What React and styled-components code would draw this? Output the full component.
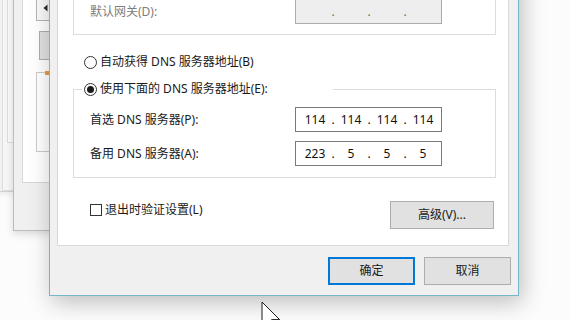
import React from "react";
import styled, { createGlobalStyle } from "styled-components";

const Global = createGlobalStyle`
  html, body { margin: 0; padding: 0; background: #fcfcfc; }
  #root { width: 570px; height: 320px; }
`;

const Desktop = styled.div`
  position: relative;
  width: 570px;
  height: 320px;
  overflow: hidden;
  background: #fcfcfc;
  font-family: "Noto Sans", "Noto Sans CJK SC", sans-serif;
  font-size: 12px;
  color: #1a1a1a;
`;

/* ---------- background windows ---------- */
const BackWindow = styled.div`
  position: absolute;
  left: -40px;
  top: -10px;
  width: 54px;
  height: 202px;
  box-sizing: border-box;
  background: #f1f1f1;
  border: 1px solid #d2d2d2;
  box-shadow: 0 2px 6px rgba(0, 0, 0, 0.08);
  display: flex;
`;

const BackPane = styled.div`
  margin-left: ${(p) => p.$indent}px;
  flex: 1;
  box-sizing: border-box;
  height: ${(p) => p.$h}px;
  border-left: 1px solid #dedede;
  border-bottom: 1px solid #dedede;
  background: ${(p) => p.$bg};
  display: flex;
`;

const MidWindow = styled.div`
  position: absolute;
  left: 13px;
  top: -10px;
  width: 70px;
  height: 241px;
  box-sizing: border-box;
  background: #f0f0f0;
  border: 1px solid #bcbcbc;
  box-shadow: 0 3px 8px rgba(0, 0, 0, 0.14);
  padding-left: 8px;
`;

const MidPanel = styled.div`
  box-sizing: border-box;
  height: 192px;
  background: #ffffff;
  border: 1px solid #d8d8d8;
  display: flex;
  flex-direction: column;
  align-items: flex-start;
  padding-top: 2px;
`;

const MidBox = styled.div`
  box-sizing: border-box;
  margin-left: ${(p) => p.$ml}px;
  margin-top: ${(p) => p.$mt}px;
  width: 60px;
  height: ${(p) => p.$h}px;
  border: 1px solid ${(p) => p.$border};
  background: ${(p) => p.$bg};
  position: relative;
  display: flex;
  align-items: center;
  padding-left: 6px;
`;

const OrangeMark = styled.span`
  position: absolute;
  left: 8px;
  top: -2px;
  width: 4px;
  height: 4px;
  background: #e0a040;
`;

/* ---------- dialog ---------- */
const Dialog = styled.div`
  position: absolute;
  left: 49px;
  top: -60px;
  width: 470px;
  box-sizing: border-box;
  border: 1px solid #74b7c9;
  background: #f0f0f0;
  box-shadow: 3px 6px 22px rgba(0, 0, 0, 0.26);
  padding: 9px 9px 10px 7px;
  display: flex;
  flex-direction: column;
  z-index: 2;
`;

const TabPanel = styled.div`
  background: #ffffff;
  border: 1px solid #d9d9d9;
  padding: 0 12px 16px 15px;
  display: flex;
  flex-direction: column;
`;

const GroupBox = styled.div`
  border: 1px solid #dcdcdc;
  margin-top: ${(p) => p.$mt}px;
  padding: ${(p) => p.$pt}px 0 ${(p) => p.$pb}px 16px;
  display: flex;
  flex-direction: column;
`;

const GroupTitle = styled.div`
  margin: -9px 0 0 -8px;
  padding-left: 2px;
  width: 249px;
  height: 16px;
  background: #ffffff;
`;

const FieldRow = styled.div`
  display: grid;
  grid-template-columns: 205px 147px;
  align-items: center;
  height: 25px;
  margin-top: ${(p) => p.$mt || 0}px;
`;

const Label = styled.span`
  line-height: 16px;
  white-space: nowrap;
  color: ${(p) => (p.$disabled ? "#7d7d7d" : "#1a1a1a")};
`;

const IpBox = styled.div`
  box-sizing: border-box;
  height: 25px;
  border: 1px solid ${(p) => (p.$disabled ? "#ababab" : "#7a7a7a")};
  background: ${(p) => (p.$disabled ? "#eeeeee" : "#ffffff")};
  padding-left: 4px;
  display: flex;
  align-items: center;
  color: #111;
`;

const IpSeg = styled.span`
  width: 30px;
  text-align: center;
  line-height: 16px;
`;

const IpDot = styled.span`
  width: 6px;
  text-align: center;
  line-height: 16px;
  color: ${(p) => (p.$disabled ? "#6d6d6d" : "#111")};
`;

const ChoiceRow = styled.label`
  display: flex;
  align-items: center;
  gap: 3px;
  height: 16px;
  line-height: 16px;
  margin-left: ${(p) => p.$ml || 0}px;
  margin-top: ${(p) => p.$mt || 0}px;
  white-space: nowrap;
`;

const Radio = styled.span`
  box-sizing: border-box;
  width: 13px;
  height: 13px;
  border-radius: 50%;
  border: 1px solid #333;
  background: #fff;
  display: flex;
  align-items: center;
  justify-content: center;
  &::after {
    content: "";
    width: 7px;
    height: 7px;
    border-radius: 50%;
    background: ${(p) => (p.$checked ? "#1a1a1a" : "transparent")};
  }
`;

const Check = styled.span`
  box-sizing: border-box;
  width: 12px;
  height: 12px;
  border: 1px solid #333;
  background: #fff;
`;

const BottomRow = styled.div`
  margin-top: 23px;
  display: flex;
  justify-content: space-between;
  align-items: flex-start;
`;

const Button = styled.button`
  box-sizing: border-box;
  width: ${(p) => p.$w}px;
  height: 28px;
  margin: 0;
  padding: 0;
  background: #e1e1e1;
  border: ${(p) => (p.$default ? "2px solid #0078d7" : "1px solid #adadad")};
  font-family: "Noto Sans", "Noto Sans CJK SC", sans-serif;
  font-size: 12px;
  color: #1a1a1a;
  line-height: 16px;
  margin-right: ${(p) => p.$mr || 0}px;
`;

const Footer = styled.div`
  margin-top: 11px;
  margin-right: -2px;
  display: flex;
  justify-content: flex-end;
  gap: 9px;
`;

const Cursor = styled.svg`
  position: absolute;
  left: 261px;
  top: 301px;
  z-index: 5;
`;

function IpField({ values, disabled }) {
  return (
    <IpBox $disabled={disabled}>
      {values.map((v, i) => (
        <React.Fragment key={i}>
          {i > 0 && <IpDot $disabled={disabled}>.</IpDot>}
          <IpSeg>{v}</IpSeg>
        </React.Fragment>
      ))}
    </IpBox>
  );
}

export default function App() {
  return (
    <Desktop>
      <Global />
      <BackWindow>
        <BackPane $indent={41} $h={200} $bg="#f6f6f6">
          <BackPane $indent={4} $h={152} $bg="#fafafa" />
        </BackPane>
      </BackWindow>
      <MidWindow>
        <MidPanel>
          <MidBox $ml={13} $mt={0} $h={27} $border="#b4b4b4" $bg="#f9f9f9">
            <svg width="6" height="8" viewBox="0 0 6 8">
              <path d="M0.5 4 L4.5 0.5 L4.5 7.5 Z" fill="#2a2a2a" />
            </svg>
          </MidBox>
          <MidBox $ml={16} $mt={10} $h={29} $border="#adadad" $bg="#e1e1e1" />
          <MidBox $ml={13} $mt={12} $h={80} $border="#cacaca" $bg="#ffffff">
            <OrangeMark />
          </MidBox>
        </MidPanel>
      </MidWindow>

      <Dialog>
        <TabPanel>
          <GroupBox $mt={13} $pt={34} $pb={10}>
            <FieldRow>
              <Label $disabled>默认网关(D):</Label>
              <IpField values={["", "", "", ""]} disabled />
            </FieldRow>
          </GroupBox>

          <ChoiceRow $ml={11} $mt={19}>
            <Radio />
            自动获得 DNS 服务器地址(B)
          </ChoiceRow>

          <GroupBox $mt={19} $pt={0} $pb={11}>
            <GroupTitle>
              <ChoiceRow>
                <Radio $checked />
                使用下面的 DNS 服务器地址(E):
              </ChoiceRow>
            </GroupTitle>
            <FieldRow $mt={10}>
              <Label>首选 DNS 服务器(P):</Label>
              <IpField values={["114", "114", "114", "114"]} />
            </FieldRow>
            <FieldRow $mt={9}>
              <Label>备用 DNS 服务器(A):</Label>
              <IpField values={["223", "5", "5", "5"]} />
            </FieldRow>
          </GroupBox>

          <BottomRow>
            <ChoiceRow $ml={17} $mt={1}>
              <Check />
              退出时验证设置(L)
            </ChoiceRow>
            <Button $w={104} $mr={2}>高级(V)...</Button>
          </BottomRow>
        </TabPanel>

        <Footer>
          <Button $w={87} $default>确定</Button>
          <Button $w={87}>取消</Button>
        </Footer>
      </Dialog>

      <Cursor width="22" height="34" viewBox="0 0 22 34">
        <path
          d="M1 1 L1 26.6 L7.4 20.2 L12.2 31.4 L15.4 29.8 L10.6 18.6 L18.6 18.6 Z"
          fill="#ffffff"
          stroke="#1a1a1a"
          strokeWidth="1"
          strokeLinejoin="miter"
        />
      </Cursor>
    </Desktop>
  );
}
